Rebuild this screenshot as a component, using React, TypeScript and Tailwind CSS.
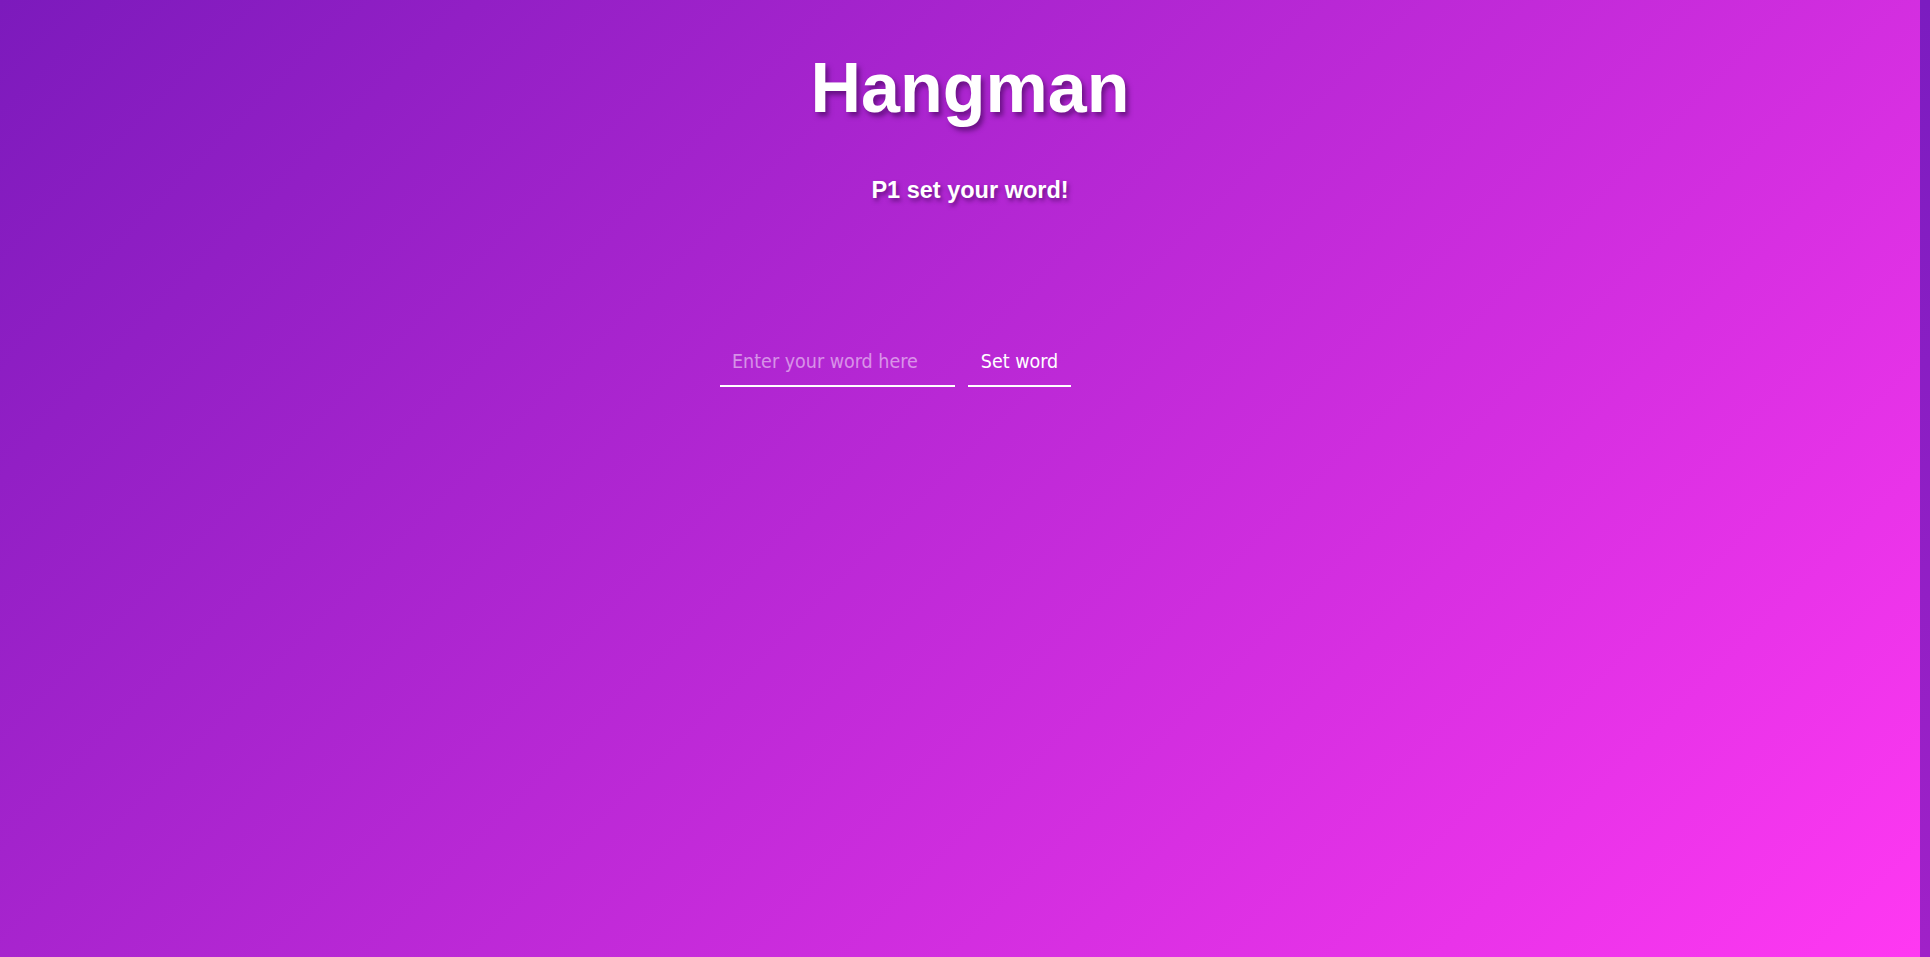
import React, { useState } from 'react';

const App = () => {
  const [word, setWord] = useState('');

  return (
    <div className="flex h-[957px] w-full overflow-hidden">
      {/* Game area */}
      <div className="flex-1 flex flex-col bg-[linear-gradient(135deg,#7c1abc_0%,#ff38f2_100%)]">
        {/* Heading */}
        <div className="flex flex-col items-center pt-[53px] pl-[20px] font-['Liberation_Sans',Arial,sans-serif] font-bold text-white">
          <h1 className="text-[70px] leading-none [text-shadow:3px_4px_5px_rgba(50,0,70,0.55)]">
            Hangman
          </h1>
          <p className="mt-[56px] text-[23.5px] leading-none [text-shadow:2px_3px_4px_rgba(50,0,70,0.55)]">
            P1 set your word!
          </p>
        </div>

        {/* Word form */}
        <form
          className="mt-[136px] flex justify-center gap-[13px] pr-[129px] font-['DejaVu_Sans_Condensed','DejaVu_Sans',sans-serif] text-[19.5px] text-white"
          onSubmit={(e) => e.preventDefault()}
        >
          <input
            type="text"
            value={word}
            onChange={(e) => setWord(e.target.value)}
            placeholder="Enter your word here"
            className="h-[48px] w-[235px] bg-transparent border-b-2 border-white pl-[12px] outline-none placeholder:text-white/50"
          />
          <button
            type="submit"
            className="h-[48px] w-[103px] bg-transparent border-b-2 border-white text-center"
          >
            Set word
          </button>
        </form>
      </div>

      {/* Right edge strip */}
      <div className="w-[10px] bg-[linear-gradient(180deg,#7b1cc0_0%,#a021c8_100%)]" />
    </div>
  );
};

export default App;
